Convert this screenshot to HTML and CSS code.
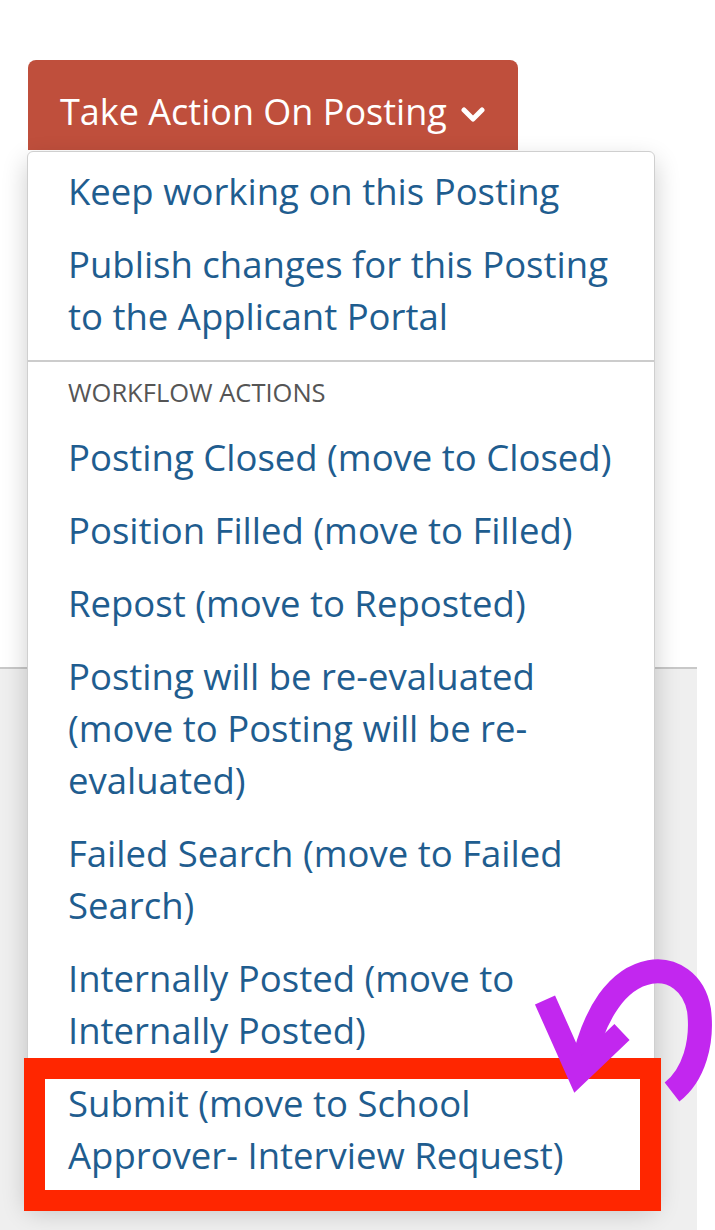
FILE: index.html
```html
<!DOCTYPE html>
<html lang="en">
<head>
<meta charset="utf-8">
<title>Take Action On Posting</title>
<link rel="stylesheet" href="styles.css">
</head>
<body>
<div class="page">
  <header class="top">
    <button class="action-btn" type="button">
      <span>Take Action On Posting</span>
      <svg class="chev" width="24" height="16" viewBox="0 0 24 16" aria-hidden="true"><path d="M3 3 L12 12 L21 3" fill="none" stroke="#fff" stroke-width="5" stroke-linecap="round" stroke-linejoin="round"/></svg>
    </button>
  </header>
  <section class="panel"></section>

  <ul class="menu">
    <li class="item">Keep working on this Posting</li>
    <li class="item">Publish changes for this Posting to the Applicant Portal</li>
    <li class="divider"></li>
    <li class="menu-header">WORKFLOW ACTIONS</li>
    <li class="item">Posting Closed (move to Closed)</li>
    <li class="item">Position Filled (move to Filled)</li>
    <li class="item">Repost (move to Reposted)</li>
    <li class="item">Posting will be re-evaluated (move to Posting will be re-evaluated)</li>
    <li class="item">Failed Search (move to Failed Search)</li>
    <li class="item">Internally Posted (move to Internally Posted)</li>
    <li class="item highlight">Submit (move to School Approver- Interview Request)</li>
  </ul>

  <svg class="annotation" width="715" height="1230" viewBox="0 0 715 1230" aria-hidden="true">
    <path d="M672 1092 C 694 1075, 703 1042, 699 1010 C 694 982, 672 968, 650 972 C 618 978, 594 1012, 582 1068" fill="none" stroke="#c227ef" stroke-width="24" stroke-linecap="butt"/>
    <path d="M545 1000 L 578 1074 L 622 1032" fill="none" stroke="#c227ef" stroke-width="22" stroke-linecap="butt" stroke-linejoin="miter"/>
  </svg>
</div>
</body>
</html>
```
FILE: styles.css
```css
* { box-sizing: border-box; }

html, body {
  margin: 0;
  padding: 0;
  background: #ffffff;
  font-family: "Open Sans", "Liberation Sans", sans-serif;
}

.page {
  position: relative;
  width: 715px;
  height: 1230px;
  overflow: hidden;
}

.top {
  height: 667px;
  padding: 60px 0 0 28px;
}

.action-btn {
  display: flex;
  align-items: center;
  gap: 14px;
  width: 490px;
  height: 90px;
  padding: 14px 0 0 32px;
  border: none;
  border-radius: 8px 8px 0 0;
  background: #bf4f3c;
  color: #ffffff;
  font-family: "Open Sans", "Liberation Sans", sans-serif;
  font-size: 36px;
  line-height: 52px;
}

.chev { margin-top: 6px; }

.panel {
  width: 697px;
  height: 563px;
  background: #efefef;
  border-top: 2px solid #c8c8c8;
}

.menu {
  position: absolute;
  left: 27px;
  top: 151px;
  width: 628px;
  margin: 0;
  padding: 3px 0 8px;
  list-style: none;
  background: #ffffff;
  border: 1px solid #cfcfcf;
  border-radius: 6px;
  box-shadow: 0 10px 26px rgba(0, 0, 0, 0.2);
}

.item {
  position: relative;
  padding: 10px 34px 11px 40px;
  font-size: 36.5px;
  line-height: 52px;
  color: #1f5d8f;
}

.divider {
  height: 2px;
  margin: 7px 0 0;
  background: #cccccc;
}

.menu-header {
  padding: 15px 40px 14px;
  font-size: 25.5px;
  line-height: 30px;
  color: #555555;
}

.highlight::after {
  content: "";
  position: absolute;
  left: -4px;
  right: -7px;
  top: -9px;
  bottom: -19px;
  border: 21px solid #ff2600;
}

.annotation {
  position: absolute;
  left: 0;
  top: 0;
  pointer-events: none;
}
```
